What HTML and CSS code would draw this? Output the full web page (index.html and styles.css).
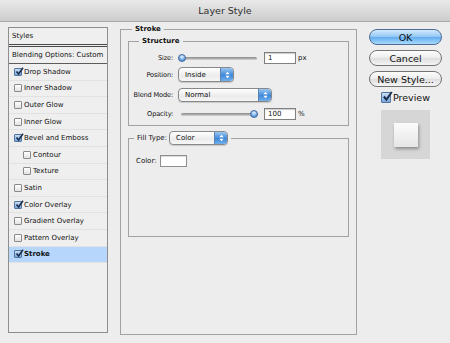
FILE: index.html
```html
<html lang="en">
<head>
    <title>Layer Style</title>
    <link rel="stylesheet" href="styles.css">
</head>
<body>
<div class="window">
    <div class="titlebar">Layer Style</div>
    <div class="content">
        <!-- effects list -->
        <div class="styles-list">
            <div class="list-head">Styles</div>
            <div class="list-blend">Blending Options: Custom</div>
            <div class="list-item"><span class="check on"><svg viewBox="0 0 9 9"><path d="M1.5 4.5 L3.6 7 L8 0.8"/></svg></span>Drop Shadow</div>
            <div class="list-item"><span class="check"></span>Inner Shadow</div>
            <div class="list-item"><span class="check"></span>Outer Glow</div>
            <div class="list-item"><span class="check"></span>Inner Glow</div>
            <div class="list-item"><span class="check on"><svg viewBox="0 0 9 9"><path d="M1.5 4.5 L3.6 7 L8 0.8"/></svg></span>Bevel and Emboss</div>
            <div class="list-item sub"><span class="check"></span>Contour</div>
            <div class="list-item sub"><span class="check"></span>Texture</div>
            <div class="list-item"><span class="check"></span>Satin</div>
            <div class="list-item"><span class="check on"><svg viewBox="0 0 9 9"><path d="M1.5 4.5 L3.6 7 L8 0.8"/></svg></span>Color Overlay</div>
            <div class="list-item"><span class="check"></span>Gradient Overlay</div>
            <div class="list-item"><span class="check"></span>Pattern Overlay</div>
            <div class="list-item selected"><span class="check on"><svg viewBox="0 0 9 9"><path d="M1.5 4.5 L3.6 7 L8 0.8"/></svg></span>Stroke</div>
        </div>

        <!-- stroke settings -->
        <fieldset class="group stroke-group">
            <legend>Stroke</legend>
            <fieldset class="group structure">
                <legend>Structure</legend>
                <div class="field row-size">
                    <span class="field-label">Size:</span>
                    <span class="slider size"><span class="thumb"></span></span>
                    <span class="num num-size">1</span>
                    <span class="unit">px</span>
                </div>
                <div class="field row-position">
                    <span class="field-label">Position:</span>
                    <span class="popup popup-position">
                        <span class="popup-text">Inside</span>
                        <span class="popup-arrows"><svg viewBox="0 0 6 9"><path d="M3 0.5 L5.5 3.5 H0.5 Z M0.5 5.5 H5.5 L3 8.5 Z"/></svg></span>
                    </span>
                </div>
                <div class="field row-blend">
                    <span class="field-label">Blend Mode:</span>
                    <span class="popup popup-blend">
                        <span class="popup-text">Normal</span>
                        <span class="popup-arrows"><svg viewBox="0 0 6 9"><path d="M3 0.5 L5.5 3.5 H0.5 Z M0.5 5.5 H5.5 L3 8.5 Z"/></svg></span>
                    </span>
                </div>
                <div class="field row-opacity">
                    <span class="field-label">Opacity:</span>
                    <span class="slider opacity"><span class="thumb"></span></span>
                    <span class="num num-opacity">100</span>
                    <span class="unit">%</span>
                </div>
            </fieldset>
            <fieldset class="group fill">
                <legend>
                    <span>Fill Type:</span>
                    <span class="popup popup-fill">
                        <span class="popup-text">Color</span>
                        <span class="popup-arrows"><svg viewBox="0 0 6 9"><path d="M3 0.5 L5.5 3.5 H0.5 Z M0.5 5.5 H5.5 L3 8.5 Z"/></svg></span>
                    </span>
                </legend>
                <div class="color-row">
                    <span>Color:</span>
                    <span class="swatch"></span>
                </div>
            </fieldset>
        </fieldset>

        <!-- dialog buttons -->
        <div class="actions">
            <button class="btn default">OK</button>
            <button class="btn">Cancel</button>
            <button class="btn">New Style...</button>
            <div class="preview-check">
                <span class="check big on"><svg viewBox="0 0 9 9"><path d="M1.5 4.5 L3.6 7 L8 0.8"/></svg></span>
                Preview
            </div>
            <div class="preview-box"><div class="preview-swatch"></div></div>
        </div>
    </div>
</div>
</body>
</html>
```

FILE: styles.css
```css
body {
    margin: 0;
    background-color: #ededed;
    font-family: "DejaVu Sans", "Liberation Sans", sans-serif;
    font-size: 7px;
    color: #111111;
}

.window {
    width: 450px;
    height: 343px;
    overflow: hidden;
}

.titlebar {
    height: 21px;
    line-height: 21px;
    text-align: center;
    font-size: 9.5px;
    color: #2e2e2e;
    background: linear-gradient(#e9e9e9, #cdcdcd);
    border-bottom: 1px solid #a8a8a8;
}

.content {
    display: flex;
    align-items: flex-start;
    padding: 2px 0 0 8px;
}

/* left list */
.styles-list {
    box-sizing: border-box;
    width: 100px;
    height: 306px;
    margin-top: 3px;
    border: 1px solid #8e8e8e;
    background-color: #efefef;
}

.list-head {
    height: 16px;
    line-height: 16px;
    padding-left: 3px;
    border-bottom: 3px double #4a4a4a;
}

.list-blend {
    height: 16px;
    line-height: 16px;
    padding-left: 3px;
    border-bottom: 1px solid #5c5c5c;
}

.list-item {
    box-sizing: border-box;
    height: 16.6px;
    display: flex;
    align-items: center;
    gap: 2px;
    padding-left: 5px;
    border-bottom: 1px solid #e2e2e2;
}

.list-item.sub {
    padding-left: 14px;
}

.list-item.selected {
    background-color: #b6d6fb;
    font-weight: bold;
}

.check {
    position: relative;
    flex: none;
    box-sizing: border-box;
    width: 8px;
    height: 8px;
    border: 1px solid #8a8a8a;
    border-radius: 1px;
    background: linear-gradient(#ffffff, #e2e2e2);
}

.check.on {
    background: linear-gradient(#c9def3, #78a8dc);
    border-color: #52739e;
}

.check svg {
    position: absolute;
    left: 0;
    top: -2px;
    width: 9px;
    height: 9px;
}

.check path {
    fill: none;
    stroke: #1b2c4d;
    stroke-width: 1.6;
}

/* group boxes */
.group {
    margin: 0;
    min-width: 0;
    border: 1px solid #a2a2a2;
}

.group > legend {
    padding: 0 3px;
    line-height: 10px;
    font-weight: bold;
}

.stroke-group {
    box-sizing: border-box;
    width: 237px;
    height: 311px;
    margin-left: 12px;
    padding: 2px 7px 0;
}

.stroke-group > legend {
    margin-left: 4px;
}

.structure {
    padding: 6px 0 5px;
}

.structure > legend {
    margin-left: 10px;
}

.field {
    display: flex;
    align-items: center;
}

.row-size { height: 12px; }
.row-position { height: 15px; margin-top: 3px; }
.row-blend { height: 14px; margin-top: 6px; }
.row-opacity { height: 12px; margin-top: 6px; }

.field-label {
    flex: none;
    width: 44px;
    margin-right: 5px;
    text-align: right;
    white-space: nowrap;
    font-size: 6.6px;
    letter-spacing: -0.15px;
}

.slider {
    flex: none;
    display: flex;
    align-items: center;
    height: 3px;
    border-radius: 2px;
    background: linear-gradient(#888888, #d2d2d2);
}

.slider.size {
    width: 79px;
}

.slider.opacity {
    width: 77px;
    margin-left: 3px;
    justify-content: flex-end;
}

.thumb {
    flex: none;
    box-sizing: border-box;
    width: 8px;
    height: 8px;
    border-radius: 50%;
    border: 1px solid #44699a;
    background: radial-gradient(circle at 50% 30%, #eef6ff, #6aa6e6 60%, #3b79c4);
}

.num {
    flex: none;
    box-sizing: border-box;
    width: 32px;
    height: 12px;
    line-height: 10px;
    padding-left: 3px;
    border: 1px solid #808080;
    background-color: #ffffff;
    box-shadow: inset 0 1px 1px rgba(0, 0, 0, 0.2);
}

.num-size { margin-left: 7px; }
.num-opacity { margin-left: 6px; }

.unit {
    margin-left: 2px;
}

.popup {
    flex: none;
    box-sizing: border-box;
    display: flex;
    height: 15px;
    border: 1px solid #888888;
    border-radius: 4px;
    background: linear-gradient(#ffffff, #ebebeb 60%, #f7f7f7);
    box-shadow: 0 1px 1px rgba(0, 0, 0, 0.15);
    overflow: hidden;
    font-weight: normal;
}

.popup-position { width: 56px; }
.popup-blend { width: 94px; height: 14px; }
.popup-fill { width: 59px; height: 14px; margin-left: 2px; }

.popup-text {
    flex: 1;
    display: flex;
    align-items: center;
    padding-left: 6px;
}

.popup-arrows {
    width: 12px;
    display: flex;
    align-items: center;
    justify-content: center;
    border-left: 1px solid #5b84b3;
    background: linear-gradient(#9ac8f4, #3f88d9 55%, #72b0ec);
}

.popup-arrows svg {
    width: 5px;
    height: 8px;
}

.popup-arrows path {
    fill: #ffffff;
}

.fill {
    box-sizing: border-box;
    height: 106px;
    margin-top: 5px;
    padding: 10px 0 0;
}

.fill > legend {
    display: flex;
    align-items: center;
    margin-left: 5px;
    font-weight: normal;
    line-height: 14px;
}

.color-row {
    display: flex;
    align-items: center;
    padding-left: 7px;
}

.swatch {
    box-sizing: border-box;
    width: 27px;
    height: 12px;
    margin-left: 3px;
    border: 1px solid #8e8e8e;
    background-color: #ffffff;
    box-shadow: inset 0 1px 1px rgba(0, 0, 0, 0.15);
}

/* right column */
.actions {
    display: flex;
    flex-direction: column;
    gap: 5px;
    width: 73px;
    margin: 5px 0 0 12px;
}

.btn {
    box-sizing: border-box;
    width: 73px;
    height: 16px;
    padding: 0;
    border: 1px solid #737373;
    border-radius: 8px;
    background: linear-gradient(#fefefe, #ececec 50%, #dedede 51%, #f5f5f5);
    font-family: "DejaVu Sans", sans-serif;
    font-size: 9.5px;
    color: #111111;
}

.btn.default {
    border-color: #4d6e96;
    background: linear-gradient(#d3eafd, #90c7f6 50%, #62acf0 51%, #a9dafc);
}

.preview-check {
    display: flex;
    align-items: center;
    gap: 2px;
    height: 11px;
    padding-left: 12px;
    font-size: 9.5px;
    color: #111111;
}

.check.big {
    width: 10px;
    height: 11px;
}

.check.big svg {
    width: 11px;
    height: 11px;
    top: -2px;
}

.preview-box {
    display: flex;
    align-items: center;
    justify-content: center;
    width: 49px;
    height: 49px;
    margin: 2px 0 0 12px;
    background-color: #d6d6d6;
}

.preview-swatch {
    width: 24px;
    height: 24px;
    background: linear-gradient(#fbfbfb, #e6e6e6);
    box-shadow: 1px 2px 3px rgba(0, 0, 0, 0.35);
}
```
